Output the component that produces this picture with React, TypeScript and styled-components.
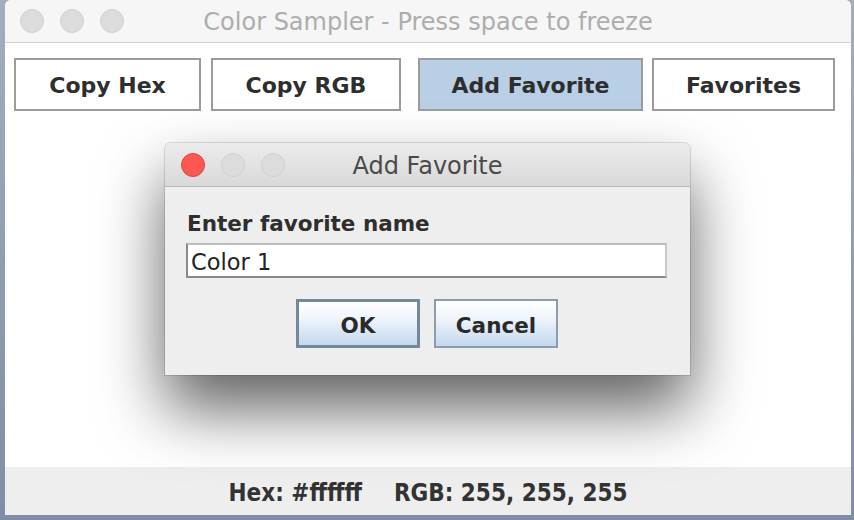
import React from "react";
import styled, { createGlobalStyle } from "styled-components";

const Global = createGlobalStyle`
  html, body { margin: 0; padding: 0; }
  body { width: 854px; height: 520px; overflow: hidden; font-family: "DejaVu Sans", sans-serif; }
`;

const Desktop = styled.div`
  position: relative;
  width: 854px;
  height: 520px;
  box-sizing: border-box;
  padding: 0 3px 5px 5px;
  background: linear-gradient(180deg, #a3adbd 0%, #7f8ea6 100%);
  display: flex;
`;

const Window = styled.div`
  flex: 1;
  display: flex;
  flex-direction: column;
  background: #ffffff;
  border-radius: 6px 6px 0 0;
  overflow: hidden;
`;

const TitleBar = styled.div<{ $dialog?: boolean }>`
  position: relative;
  height: ${(p) => (p.$dialog ? "44px" : "43px")};
  flex: none;
  display: flex;
  align-items: center;
  justify-content: center;
  background: ${(p) => (p.$dialog ? "linear-gradient(180deg, #ececec 0%, #d9d9d9 100%)" : "#f6f6f6")};
  border-bottom: 1px solid ${(p) => (p.$dialog ? "#b9b9b9" : "#d2d2d2")};
  box-sizing: border-box;
`;

const Lights = styled.div<{ $left: number }>`
  position: absolute;
  left: ${(p) => p.$left}px;
  top: 0;
  bottom: 0;
  display: flex;
  align-items: center;
  gap: 16px;
`;

const Light = styled.span<{ $color?: string }>`
  width: 24px;
  height: 24px;
  border-radius: 50%;
  box-sizing: border-box;
  background: ${(p) => p.$color ?? "#dcdcdc"};
  border: 1px solid ${(p) => (p.$color ? "#e0443e" : "#d0d0d0")};
`;

const Title = styled.div<{ $dim?: boolean }>`
  font-family: "DejaVu Sans", sans-serif;
  font-size: 24px;
  color: ${(p) => (p.$dim ? "#adadad" : "#4a4a4a")};
  margin-top: ${(p) => (p.$dim ? "2px" : "3px")};
`;

const Toolbar = styled.div`
  display: flex;
  padding: 15px 16px 0 9px;
  height: 53px;
  box-sizing: content-box;
`;

const ToolButton = styled.div<{ $w: number; $gap: number; $active?: boolean }>`
  width: ${(p) => p.$w}px;
  margin-right: ${(p) => p.$gap}px;
  height: 53px;
  box-sizing: border-box;
  padding-top: 2px;
  border: 2px solid #9c9c9c;
  background: ${(p) => (p.$active ? "#b8cfe6" : "#ffffff")};
  display: flex;
  align-items: center;
  justify-content: center;
  font-family: "DejaVu Sans", sans-serif;
  font-weight: 700;
  font-size: 22px;
  color: #2e2e2e;
`;

const Content = styled.div`
  flex: 1;
`;

const StatusBar = styled.div`
  height: 48px;
  flex: none;
  background: #eeeeee;
  display: flex;
  align-items: center;
  justify-content: center;
  gap: 32px;
  padding-top: 3px;
  box-sizing: border-box;
  font-family: "DejaVu Sans Condensed", "Liberation Sans Narrow", sans-serif;
  font-stretch: condensed;
  font-size: 24px;
  font-weight: 700;
  color: #333333;
`;

const Dialog = styled.div`
  position: absolute;
  left: 165px;
  top: 143px;
  width: 525px;
  height: 232px;
  display: flex;
  flex-direction: column;
  background: #eeeeee;
  border-radius: 6px 6px 0 0;
  overflow: hidden;
  box-shadow: 0 34px 64px rgba(0, 0, 0, 0.62), 0 0 0 1px rgba(0, 0, 0, 0.12);
`;

const DialogBody = styled.div`
  display: flex;
  flex-direction: column;
  padding: 23px 23px 0 21px;
`;

const Label = styled.div`
  font-family: "DejaVu Sans", sans-serif;
  font-weight: 700;
  font-size: 21.5px;
  color: #2e2e2e;
  line-height: 28px;
  margin-left: 1px;
`;

const Field = styled.div`
  margin-top: 5px;
  height: 35px;
  box-sizing: border-box;
  background: #ffffff;
  border: 2px solid #8a8a8a;
  border-top-color: #bdbdbd;
  border-right-color: #c8c8c8;
  display: flex;
  align-items: center;
  padding: 3px 0 0 3px;
  font-family: "DejaVu Sans", sans-serif;
  font-size: 22.5px;
  color: #222;
`;

const ButtonRow = styled.div`
  display: flex;
  justify-content: center;
  gap: 14px;
  margin-top: 21px;
  padding-left: 1px;
`;

const DlgButton = styled.div<{ $default?: boolean }>`
  width: 124px;
  height: 49px;
  box-sizing: border-box;
  padding-top: 3px;
  border: ${(p) => (p.$default ? "3px solid #74889c" : "2px solid #8c9cac")};
  background: linear-gradient(180deg, #ffffff 0%, #eef4fa 40%, #c3d9ef 100%);
  display: flex;
  align-items: center;
  justify-content: center;
  font-family: "DejaVu Sans", sans-serif;
  font-weight: 700;
  font-size: 21.5px;
  color: #2a2a2a;
`;

const buttons = [
  { label: "Copy Hex", w: 187, gap: 10 },
  { label: "Copy RGB", w: 190, gap: 17 },
  { label: "Add Favorite", w: 225, gap: 9, active: true },
  { label: "Favorites", w: 183, gap: 0 },
];

export default function App() {
  return (
    <>
      <Global />
      <Desktop>
        <Window>
          <TitleBar>
            <Lights $left={15}>
              <Light />
              <Light />
              <Light />
            </Lights>
            <Title $dim>Color Sampler - Press space to freeze</Title>
          </TitleBar>
          <Toolbar>
            {buttons.map((b) => (
              <ToolButton key={b.label} $w={b.w} $gap={b.gap} $active={b.active}>
                {b.label}
              </ToolButton>
            ))}
          </Toolbar>
          <Content />
          <StatusBar>
            <span>Hex: #ffffff</span>
            <span>RGB: 255, 255, 255</span>
          </StatusBar>
        </Window>
        <Dialog>
          <TitleBar $dialog>
            <Lights $left={16}>
              <Light $color="#fc5753" />
              <Light />
              <Light />
            </Lights>
            <Title>Add Favorite</Title>
          </TitleBar>
          <DialogBody>
            <Label>Enter favorite name</Label>
            <Field>Color 1</Field>
            <ButtonRow>
              <DlgButton $default>OK</DlgButton>
              <DlgButton>Cancel</DlgButton>
            </ButtonRow>
          </DialogBody>
        </Dialog>
      </Desktop>
    </>
  );
}
